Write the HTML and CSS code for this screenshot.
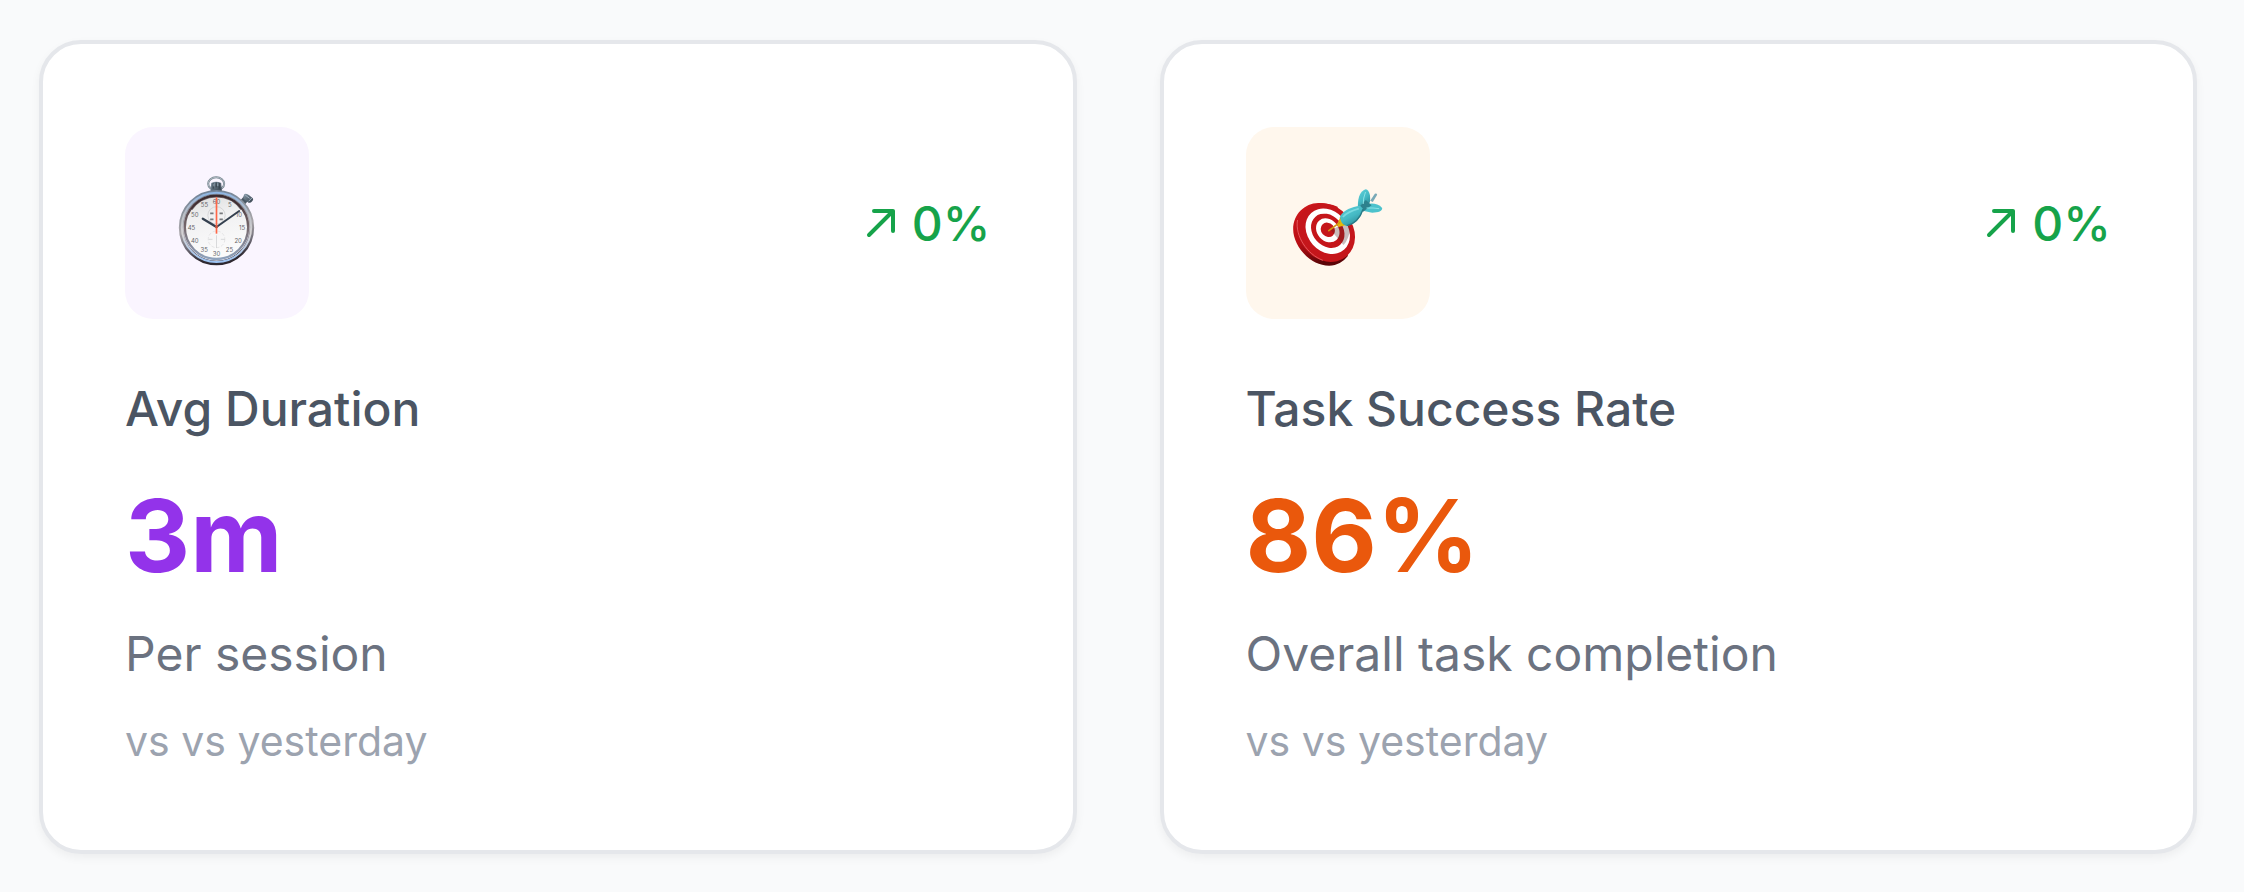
FILE: index.html
```html
<!DOCTYPE html>
<html lang="en">
<head>
    <meta charset="UTF-8">
    <meta name="viewport" content="width=device-width, initial-scale=1.0">
    <title>Session Metrics</title>
    <link rel="stylesheet" href="styles.css">
</head>
<body>
    <main class="metrics-grid">
        <section class="metric-card">
            <div class="card-header">
                <div class="card-icon purple-bg">
                    <!-- Stopwatch -->
                    <svg viewBox="171 174 303 330" role="img" aria-label="Stopwatch">
                        <defs>
                            <linearGradient id="rim" x1="0" y1="0" x2="0.15" y2="1">
                                <stop offset="0" stop-color="#6f8399"/>
                                <stop offset="0.3" stop-color="#8d939c"/>
                                <stop offset="0.55" stop-color="#a9a6aa"/>
                                <stop offset="0.8" stop-color="#6d6a75"/>
                                <stop offset="1" stop-color="#2e2830"/>
                            </linearGradient>
                            <linearGradient id="rim-light" x1="0" y1="0" x2="0" y2="1">
                                <stop offset="0" stop-color="#8fb6e4"/>
                                <stop offset="0.3" stop-color="#b9bec6"/>
                                <stop offset="0.6" stop-color="#d6d3d4"/>
                                <stop offset="1" stop-color="#9cc3f2"/>
                            </linearGradient>
                            <linearGradient id="rim-inner" x1="0" y1="0" x2="0" y2="1">
                                <stop offset="0" stop-color="#3d2c31"/>
                                <stop offset="0.5" stop-color="#77696d"/>
                                <stop offset="1" stop-color="#8fa3bd"/>
                            </linearGradient>
                            <linearGradient id="face" x1="0" y1="0" x2="0.2" y2="1">
                                <stop offset="0" stop-color="#dcdddd"/>
                                <stop offset="0.4" stop-color="#f1f1f2"/>
                                <stop offset="1" stop-color="#fbfbfb"/>
                            </linearGradient>
                            <linearGradient id="knob" x1="0" y1="0" x2="1" y2="1">
                                <stop offset="0" stop-color="#8b9dac"/>
                                <stop offset="0.5" stop-color="#5c6b78"/>
                                <stop offset="1" stop-color="#35404b"/>
                            </linearGradient>
                        </defs>
                        <ellipse cx="320" cy="221" rx="24" ry="19" fill="none" stroke="#73818c" stroke-width="6"/>
                        <ellipse cx="320" cy="221" rx="24" ry="19" fill="none" stroke="#c9d3da" stroke-width="2"/>
                        <path d="M305 219q15-8 30 0l2 24h-34z" fill="url(#knob)"/>
                        <path d="M311 219v17M320 217v15M329 219v17" stroke="#2f3a44" stroke-width="3"/>
                        <path d="M313 221v8M325 220v8" stroke="#b4c4d2" stroke-width="2"/>
                        <path d="M393 271l13-15 13 11-11 15z" fill="#4b5965"/>
                        <path d="M405 252q7-3 14 4l11 9q3 4-2 9-5 6-11 4l-15-12q-3-6 3-14z" fill="url(#knob)"/>
                        <path d="M407 255l13 10M417 274l10-10" stroke="#a1b3c2" stroke-width="3"/>
                        <circle cx="321" cy="353" r="106" fill="none" stroke="url(#rim)" stroke-width="14"/>
                        <circle cx="321" cy="352" r="104" fill="none" stroke="url(#rim-light)" stroke-width="6"/>
                        <circle cx="321" cy="352" r="95" fill="url(#face)" stroke="url(#rim-inner)" stroke-width="7"/>
                        <path d="M246 298a92 92 0 0 1 150 0" fill="none" stroke="#3a2a2e" stroke-width="6" opacity=".7"/>
                        <g fill="none" stroke="#c9cacc" stroke-width="2">
                            <circle cx="321" cy="316" r="26"/>
                            <circle cx="321" cy="388" r="25" stroke="#dcdcde" stroke-dasharray="10 5"/>
                            <path d="M321 376v38M297 388h12M334 388h12"/>
                        </g>
                        <g class="dial-numbers">
                            <text x="321" y="281">60</text>
                            <text x="361" y="292">5</text>
                            <text x="388" y="320">10</text>
                            <text x="398" y="360">15</text>
                            <text x="386" y="398">20</text>
                            <text x="360" y="427">25</text>
                            <text x="321" y="439">30</text>
                            <text x="284" y="427">35</text>
                            <text x="256" y="398">40</text>
                            <text x="246" y="360">45</text>
                            <text x="256" y="320">50</text>
                            <text x="285" y="292">55</text>
                        </g>
                        <path d="M302 310h10M330 310h10M302 328h10M330 328h10" stroke="#77797d" stroke-width="5"/>
                        <path d="M280 326l41 25" stroke="#34404f" stroke-width="7" stroke-linecap="round"/>
                        <path d="M321 351l68-48" stroke="#34404f" stroke-width="6" stroke-linecap="round"/>
                        <path d="M321 262v109" stroke="#ff6647" stroke-width="5"/>
                        <circle cx="321" cy="351" r="4" fill="#c8553f"/>
                    </svg>
                </div>
                <div class="trend">
                    <svg class="trend-arrow" viewBox="0 0 30 30" aria-hidden="true">
                        <path d="M8 3h19v20M27 3L3 27"/>
                    </svg>
                    <span>0%</span>
                </div>
            </div>
            <h3 class="card-title">Avg Duration</h3>
            <p class="card-value purple">3m</p>
            <p class="card-description">Per session</p>
            <p class="card-period">vs vs yesterday</p>
        </section>

        <section class="metric-card">
            <div class="card-header">
                <div class="card-icon orange-bg">
                    <!-- Dart board -->
                    <svg viewBox="170 174 303 330" role="img" aria-label="Dart board">
                        <defs>
                            <linearGradient id="board" x1="0" y1="0" x2="0.4" y2="1">
                                <stop offset="0" stop-color="#d21a1e"/>
                                <stop offset="0.6" stop-color="#b80e14"/>
                                <stop offset="1" stop-color="#5c0508"/>
                            </linearGradient>
                            <linearGradient id="flight" x1="0" y1="0" x2="0.6" y2="1">
                                <stop offset="0" stop-color="#5fd3dc"/>
                                <stop offset="0.6" stop-color="#45b9c4"/>
                                <stop offset="1" stop-color="#2c8c98"/>
                            </linearGradient>
                        </defs>
                        <path d="M262 279C222 280 187 312 187 358c0 50 50 109 108 109 24 0 42-12 56-29L320 290q-30-12-58-11z" fill="url(#board)"/>
                        <ellipse cx="287" cy="368" rx="80" ry="93" transform="rotate(-40 287 368)" fill="#c5161b"/>
                        <path d="M200 330c-8 48 29 103 76 121" fill="none" stroke="#e4555a" stroke-width="3"/>
                        <g transform="rotate(-42 290 363)">
                            <ellipse cx="290" cy="364" rx="60" ry="74" fill="#fff"/>
                            <ellipse cx="291" cy="363" rx="45" ry="56" fill="#c5161b"/>
                            <ellipse cx="292" cy="362" rx="32" ry="39" fill="#fff"/>
                            <ellipse cx="293" cy="361" rx="20" ry="23" fill="#c5161b"/>
                        </g>
                        <path d="M300 361l38 44q18-20 20-52l-20-12z" fill="#4b2326" opacity=".3"/>
                        <path d="M320 340l9-20 16 26-23 5z" fill="#e5b90b"/>
                        <path d="M294 362l32-24" stroke="#d29a12" stroke-width="5" stroke-linecap="round"/>
                        <path d="M328 322l12 22" stroke="#a87f0a" stroke-width="3"/>
                        <path d="M418 272l14-21q6-2 7 3l-13 22z" fill="#79a9b7"/>
                        <path d="M381 289c0-28 8-47 24-51 11 3 15 20 12 39l-12 16z" fill="url(#flight)"/>
                        <path d="M397 286c17-7 42-9 57 8 1 9-11 14-30 14l-28-6z" fill="#4cc2cc"/>
                        <path d="M385 291l20-21 17 16-25 19z" fill="#2d818d"/>
                        <path d="M328 318c11-19 34-27 60-31l9 10c-5 22-21 45-49 51-12-3-20-12-20-30z" fill="url(#flight)"/>
                        <path d="M336 321c14-15 29-20 48-25" fill="none" stroke="#8ce4e8" stroke-width="5" opacity=".7"/>
                        <path d="M348 347c26-6 42-29 49-50" fill="none" stroke="#287985" stroke-width="4"/>
                        <path d="M404 246q-7 18-7 36M407 294q20-1 38 2" fill="none" stroke="#8be2e6" stroke-width="3"/>
                    </svg>
                </div>
                <div class="trend">
                    <svg class="trend-arrow" viewBox="0 0 30 30" aria-hidden="true">
                        <path d="M8 3h19v20M27 3L3 27"/>
                    </svg>
                    <span>0%</span>
                </div>
            </div>
            <h3 class="card-title">Task Success Rate</h3>
            <p class="card-value orange">86%</p>
            <p class="card-description">Overall task completion</p>
            <p class="card-period">vs vs yesterday</p>
        </section>
    </main>
</body>
</html>
```

FILE: styles.css
```css
* {
    box-sizing: border-box;
}

body {
    margin: 0;
    min-height: 100vh;
    background-color: #f9fafb;
    font-family: Inter, "Liberation Sans", sans-serif;
}

.metrics-grid {
    display: grid;
    grid-template-columns: 1fr 1fr;
    gap: 83px;
    padding: 40px 47px 38px 39px;
}

.metric-card {
    padding: 83px 82px;
    background-color: #fff;
    border: 4px solid #e5e7eb;
    border-radius: 42px;
    box-shadow: 0 4px 10px rgba(0, 0, 0, 0.05);
}

.card-header {
    display: flex;
    align-items: center;
    justify-content: space-between;
    margin-bottom: 55px;
}

.card-icon {
    padding: 41px;
    border-radius: 28px;
}

.card-icon svg {
    display: block;
    width: 102px;
    height: 110px;
}

.purple-bg {
    background-color: #faf5ff;
}

.orange-bg {
    background-color: #fff7ed;
}

.dial-numbers {
    font-size: 18px;
    fill: #66676b;
    text-anchor: middle;
}

.trend {
    display: flex;
    align-items: center;
    gap: 16px;
    color: #16a34a;
    font-size: 48px;
    font-weight: 500;
    line-height: 69px;
}

.trend-arrow {
    width: 30px;
    height: 30px;
    fill: none;
    stroke: currentColor;
    stroke-width: 4;
    stroke-linecap: round;
    stroke-linejoin: round;
}

.card-title {
    margin: 0 0 30px;
    color: #4b5563;
    font-size: 48px;
    font-weight: 500;
    line-height: 69px;
}

.card-value {
    margin: 0 0 22px;
    font-size: 101px;
    font-weight: 700;
    line-height: 124px;
}

.purple {
    color: #9333ea;
}

.orange {
    color: #ea580c;
}

.card-description {
    margin: 0 0 27px;
    color: #6b7280;
    font-size: 48px;
    line-height: 69px;
}

.card-period {
    margin: 0;
    color: #9ca3af;
    font-size: 41px;
    line-height: 52px;
}
```
